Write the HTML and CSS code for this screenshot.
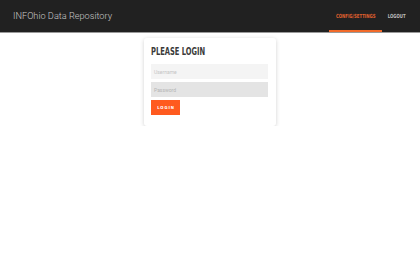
FILE: index.html
```html
<!DOCTYPE html>
<html>
<head>
<meta charset="utf-8">
<link rel="stylesheet" href="styles.css">
</head>
<body>
<header class="topbar">
  <div class="brand">INFOhio Data Repository</div>
  <nav class="nav">
    <a class="nav-item nav-config active"><span class="nav-label">CONFIG/SETTINGS</span></a>
    <a class="nav-item nav-logout"><span class="nav-label">LOGOUT</span></a>
  </nav>
</header>
<main class="main">
  <div class="card">
    <h1 class="card-title"><span class="title-text">PLEASE LOGIN</span></h1>
    <div class="field field-user">Username</div>
    <div class="field field-pass">Password</div>
    <button class="btn">LOGIN</button>
  </div>
</main>
</body>
</html>
```
FILE: styles.css
```css
html, body { margin: 0; padding: 0; background: #fff; }
body { font-family: Roboto, "Liberation Sans", sans-serif; }
.topbar {
  height: 32px;
  background: #212121;
  border-bottom: 1px solid #9a9a9a;
  display: flex;
  align-items: stretch;
  justify-content: space-between;
}
.brand {
  color: #c8c8c8;
  font-size: 9.2px;
  font-weight: 300;
  padding-left: 13px;
  display: flex;
  align-items: center;
  padding-bottom: 1px;
}
.nav { display: flex; align-items: stretch; padding-right: 8px; }
.nav-item {
  font-family: "DejaVu Sans Condensed", "DejaVu Sans", sans-serif;
  font-weight: bold;
  font-size: 5.6px;
  color: #bdbdbd;
  display: flex;
  align-items: center;
  justify-content: center;
  box-sizing: border-box;
  border-bottom: 2px solid transparent;
  padding-top: 2px;
  white-space: nowrap;
}
.nav-label { display: inline-block; transform: scaleX(0.77); }
.nav-config { width: 53px; }
.nav-logout { width: 30px; }
.nav-item.active { color: #e0602e; border-bottom-color: #f26a2a; }
.main { display: flex; justify-content: center; padding-top: 5px; }
.card {
  width: 132px;
  box-sizing: border-box;
  background: #fff;
  border-radius: 3px;
  box-shadow: 0 1px 4px rgba(0,0,0,0.18);
  padding: 7px 7px 11px 7px;
}
.card-title {
  margin: 1px 0 6px 0;
  font-family: "DejaVu Sans Condensed", "DejaVu Sans", sans-serif;
  font-weight: bold;
  font-size: 11px;
  color: #3a3a3a;
  line-height: 12px;
  white-space: nowrap;
}
.title-text { display: inline-block; transform: scaleX(0.68); transform-origin: left center; }
.field {
  height: 15px;
  width: 117px;
  font-size: 5px;
  color: #c4c4c4;
  display: flex;
  align-items: center;
  padding-left: 3px;
  box-sizing: border-box;
  margin-bottom: 3px;
}
.field-user { background: #f4f4f4; }
.field-pass { background: #e4e4e4; color: #b4b4b4; }
.btn {
  display: block;
  height: 15px;
  width: 29px;
  border: 0;
  padding: 0 0 0 1px;
  background: #ff5a1f;
  color: #fff;
  font-family: "DejaVu Sans Condensed", "DejaVu Sans", sans-serif;
  font-weight: bold;
  font-size: 4.2px;
  letter-spacing: 0.9px;
}
```
